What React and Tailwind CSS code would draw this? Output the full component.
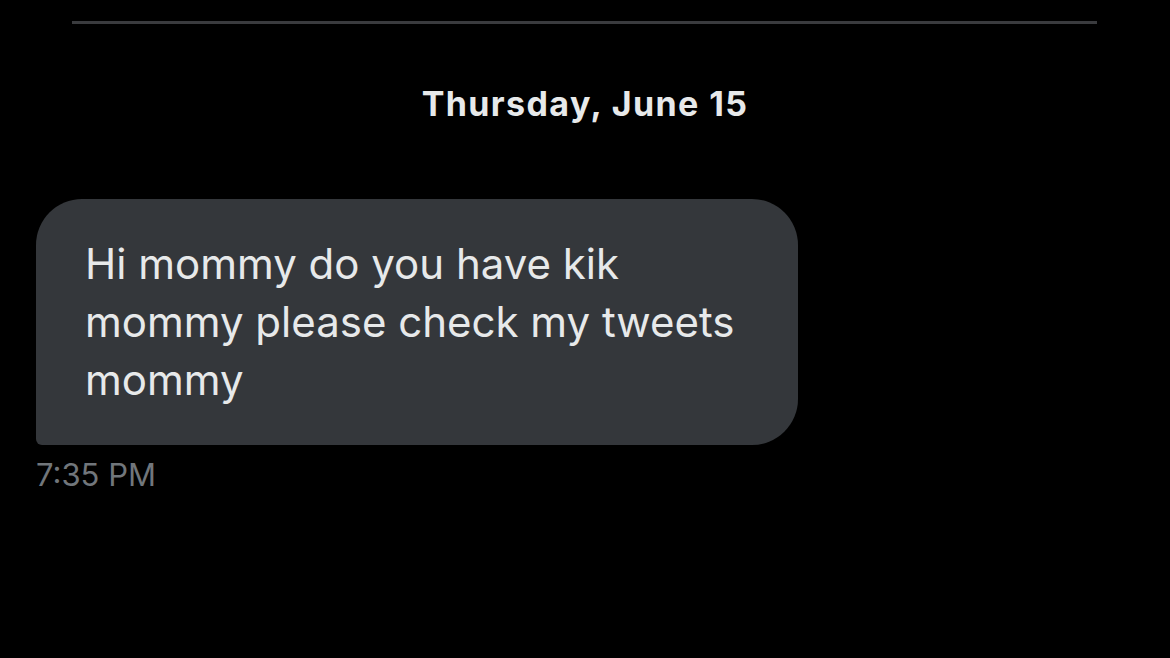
export default function App() {
  return (
    <div className="w-[1170px] h-[658px] bg-black overflow-hidden" style={{ fontFamily: "Inter, 'Liberation Sans', sans-serif" }}>
      <div className="pt-[21px] px-[72px] pr-[73px]">
        <div className="h-[3px] bg-[#3a3b3e]" />
      </div>
      <div className="mt-[52px] text-center text-[34px] leading-[56px] font-bold tracking-[1.4px] text-[#e7e9ea]">Thursday, June 15</div>
      <div className="mt-[67px] pl-[36px]">
        <div className="w-[762px] h-[246px] bg-[#34373b] rounded-[46px] rounded-bl-[6px] pl-[49px] pt-[36px]">
          <p className="text-[42px] leading-[58px] text-[#e7e9ea] whitespace-nowrap">
            Hi mommy do you have kik
            <br />
            mommy please check my tweets
            <br />
            mommy
          </p>
        </div>
        <div className="mt-[12px] text-[31px] leading-[36px] text-[#71767b]">7:35 PM</div>
      </div>
    </div>
  );
}
